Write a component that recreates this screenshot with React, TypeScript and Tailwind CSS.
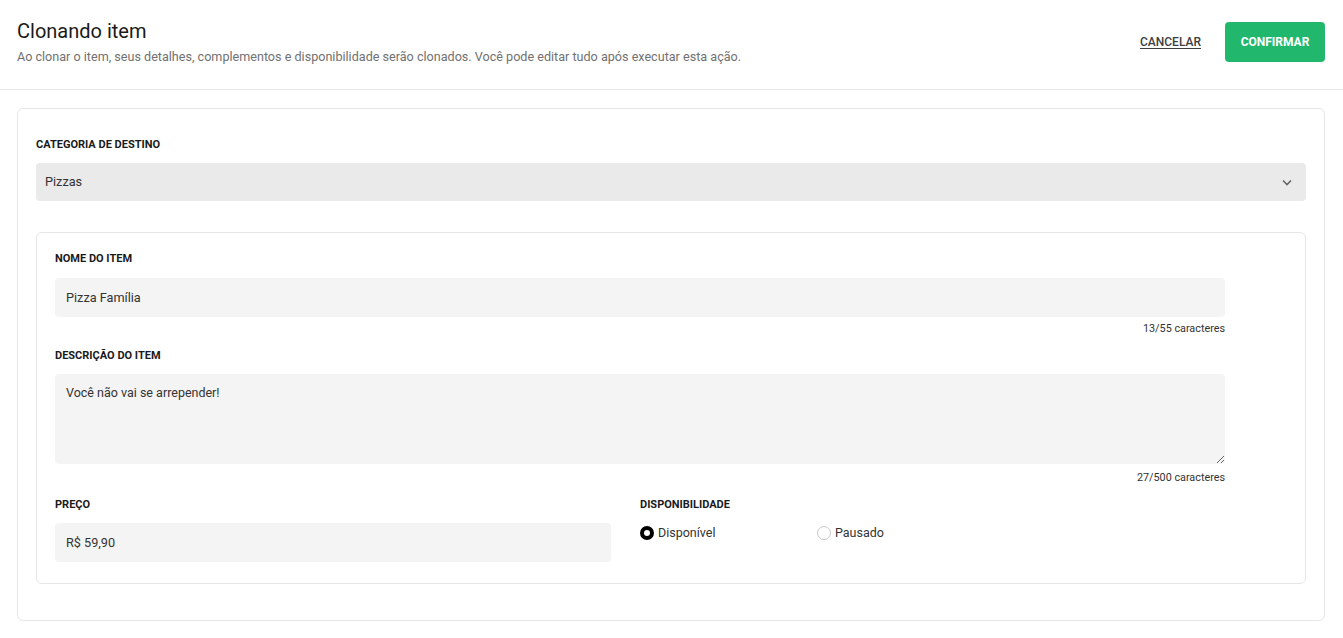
import { useState } from 'react';

const labelClass = 'block text-[11px] font-bold uppercase leading-[14px] text-[#1a1a1a]';
const fieldClass =
  'block h-[39px] w-full rounded-[4px] bg-[#f4f4f4] px-[11px] text-[12.7px] text-[#333] outline-none';

function Radio({ checked, label, onClick }: { checked: boolean; label: string; onClick: () => void }) {
  return (
    <button type="button" onClick={onClick} className="flex items-center gap-[4px] text-[12.5px] text-[#333]">
      {checked ? (
        <span className="box-border size-[14px] rounded-full border-[4px] border-black bg-white" />
      ) : (
        <span className="box-border size-[14px] rounded-full border border-[#c8c8c8] bg-white" />
      )}
      <span className="leading-[16px]">{label}</span>
    </button>
  );
}

export default function App() {
  const [status, setStatus] = useState('disponivel');

  return (
    <div className="min-h-[638px] bg-white font-['Roboto','Liberation_Sans',sans-serif]">
      {/* Header */}
      <header className="flex items-center justify-between border-b border-[#e6e6e6] pl-[17px] pr-[18px] pt-[18px] pb-[24px]">
        <div>
          <h1 className="text-[20px] leading-[26px] text-[#1a1a1a]">Clonando item</h1>
          <p className="mt-[5px] text-[12.6px] leading-[16px] text-[#717171]">
            Ao clonar o item, seus detalhes, complementos e disponibilidade serão clonados. Você pode editar tudo
            após executar esta ação.
          </p>
        </div>
        <div className="mt-[1px] flex items-center gap-[24px]">
          <button type="button" className="text-[12px] font-medium uppercase text-[#3e3e3e] underline underline-offset-2">
            Cancelar
          </button>
          <button
            type="button"
            className="h-[40px] w-[100px] rounded-[4px] bg-[#21b86d] text-[12px] font-bold uppercase text-white"
          >
            Confirmar
          </button>
        </div>
      </header>

      {/* Form card */}
      <div className="ml-[17px] mr-[18px] mt-[18px] rounded-[6px] border border-[#e6e6e6] px-[18px] pt-[29px] pb-[36px]">
        <label className={labelClass}>Categoria de destino</label>
        <div className="mt-[11px] flex h-[38px] items-center justify-between rounded-[4px] bg-[#eaeaea] pl-[9px] pr-[14px] text-[12.7px] text-[#333]">
          <span>Pizzas</span>
          <svg width="10" height="7" viewBox="0 0 10 7" fill="none">
            <path d="M1 1.5L5 5.5L9 1.5" stroke="#666" strokeWidth="1.6" />
          </svg>
        </div>

        <div className="mt-[31px] rounded-[6px] border border-[#e6e6e6] pl-[18px] pr-[80px] pt-[19px] pb-[21px]">
          <label className={labelClass}>Nome do item</label>
          <input className={`${fieldClass} mt-[12px] h-[38px]`} defaultValue="Pizza Família" />
          <p className="mt-[5px] text-right text-[10.8px] leading-[13px] text-[#333]">13/55 caracteres</p>

          <label className={`${labelClass} mt-[14px]`}>Descrição do item</label>
          <textarea
            className="mt-[11px] block h-[90px] w-full resize-y rounded-[4px] bg-[#f4f4f4] px-[11px] pt-[11px] text-[12.5px] leading-[16px] text-[#333] outline-none"
            defaultValue="Você não vai se arrepender!"
          />
          <p className="mt-[7px] text-right text-[10.8px] leading-[13px] text-[#333]">27/500 caracteres</p>

          <div className="mt-[14px] flex">
            <div className="w-[556px]">
              <label className={labelClass}>Preço</label>
              <input className={`${fieldClass} mt-[11px]`} defaultValue="R$ 59,90" />
            </div>
            <div className="ml-[29px]">
              <label className={labelClass}>Disponibilidade</label>
              <div className="mt-[13px] flex">
                <div className="w-[177px]">
                  <Radio checked={status === 'disponivel'} label="Disponível" onClick={() => setStatus('disponivel')} />
                </div>
                <Radio checked={status === 'pausado'} label="Pausado" onClick={() => setStatus('pausado')} />
              </div>
            </div>
          </div>
        </div>
      </div>
    </div>
  );
}
